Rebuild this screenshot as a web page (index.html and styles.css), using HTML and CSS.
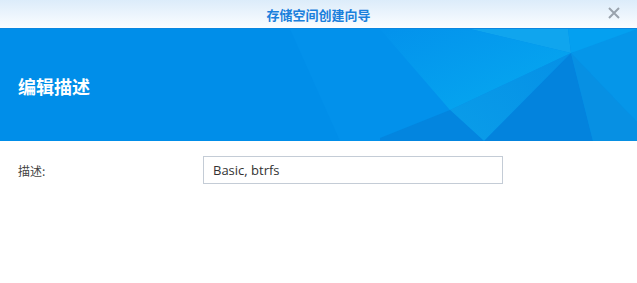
FILE: index.html
```html
<!DOCTYPE html>
<html lang="zh-CN">
<head>
<meta charset="utf-8">
<title>存储空间创建向导</title>
<link rel="stylesheet" href="styles.css">
</head>
<body>
<div class="window">
  <header class="titlebar">
    <span class="title">存储空间创建向导</span>
    <button class="close" aria-label="关闭">
      <svg width="14" height="14" viewBox="0 0 14 14"><path d="M2 2 L12 12 M12 2 L2 12" stroke="#9aa3ad" stroke-width="2" fill="none"/></svg>
    </button>
  </header>
  <section class="banner">
    <svg class="bg" viewBox="0 0 637 112" preserveAspectRatio="none">
      <defs>
        <linearGradient id="g1" x1="0" y1="0" x2="1" y2="1">
          <stop offset="0" stop-color="#0392ec"/>
          <stop offset="1" stop-color="#06aaf0"/>
        </linearGradient>
        <linearGradient id="g2" x1="0" y1="1" x2="1" y2="0">
          <stop offset="0" stop-color="#0a9de9"/>
          <stop offset="1" stop-color="#0590e6"/>
        </linearGradient>
      </defs>
      <rect width="637" height="112" fill="#008ee9"/>
      <polygon points="290,0 470,0 571,24 637,20 637,112 340,112" fill="#0291eb"/>
      <polygon points="470,0 568,0 571,24" fill="#10a5ee"/>
      <polygon points="568,0 637,0 637,8 571,24" fill="#04a0f0"/>
      <polygon points="571,24 637,0 637,93" fill="#0596e9"/>
      <polygon points="380,0 470,0 571,24 450,81" fill="url(#g1)"/>
      <polygon points="450,81 571,24 484,112" fill="url(#g2)"/>
      <polygon points="571,24 593,112 484,112" fill="#0383dd"/>
      <polygon points="571,24 637,93 637,112 593,112" fill="#0790e3"/>
      <polygon points="380,109 450,81 484,112 380,112" fill="#0385df"/>
    </svg>
    <h1 class="heading">编辑描述</h1>
  </section>
  <main class="content">
    <div class="row">
      <label class="label" for="desc">描述:</label>
      <input class="field" id="desc" type="text" value="Basic, btrfs">
    </div>
  </main>
</div>
</body>
</html>
```

FILE: styles.css
```css
html, body {
  margin: 0;
  padding: 0;
  background: #fff;
  font-family: "Noto Sans CJK SC", "Liberation Sans", sans-serif;
}
.window {
  width: 637px;
  height: 283px;
  display: flex;
  flex-direction: column;
  overflow: hidden;
}
.titlebar {
  height: 28px;
  flex: none;
  display: flex;
  align-items: center;
  justify-content: center;
  position: relative;
  background: linear-gradient(#dcecfa, #fbfdff);
  border-bottom: 1px solid #0a86e0;
}
.title {
  font-size: 13px;
  font-weight: bold;
  color: #1a80dc;
}
.close {
  position: absolute;
  right: 16px;
  top: 6px;
  width: 14px;
  height: 14px;
  padding: 0;
  border: 0;
  background: none;
  display: flex;
}
.banner {
  height: 112px;
  flex: none;
  position: relative;
  display: flex;
  align-items: center;
  padding-left: 18px;
}
.bg {
  position: absolute;
  inset: 0;
  width: 100%;
  height: 100%;
}
.heading {
  position: relative;
  margin: 0;
  font-size: 18px;
  font-weight: bold;
  color: #fff;
  line-height: 1;
  padding-top: 2px;
}
.content {
  padding: 15px 0 0 18px;
}
.row {
  display: flex;
  align-items: center;
}
.label {
  width: 185px;
  font-size: 12px;
  color: #444;
}
.field {
  box-sizing: border-box;
  width: 300px;
  height: 28px;
  border: 1px solid #c4ccd6;
  padding: 0 9px;
  font-family: "Open Sans", "Noto Sans", sans-serif;
  font-size: 13px;
  color: #333;
  outline: none;
  margin: 0;
}
```
